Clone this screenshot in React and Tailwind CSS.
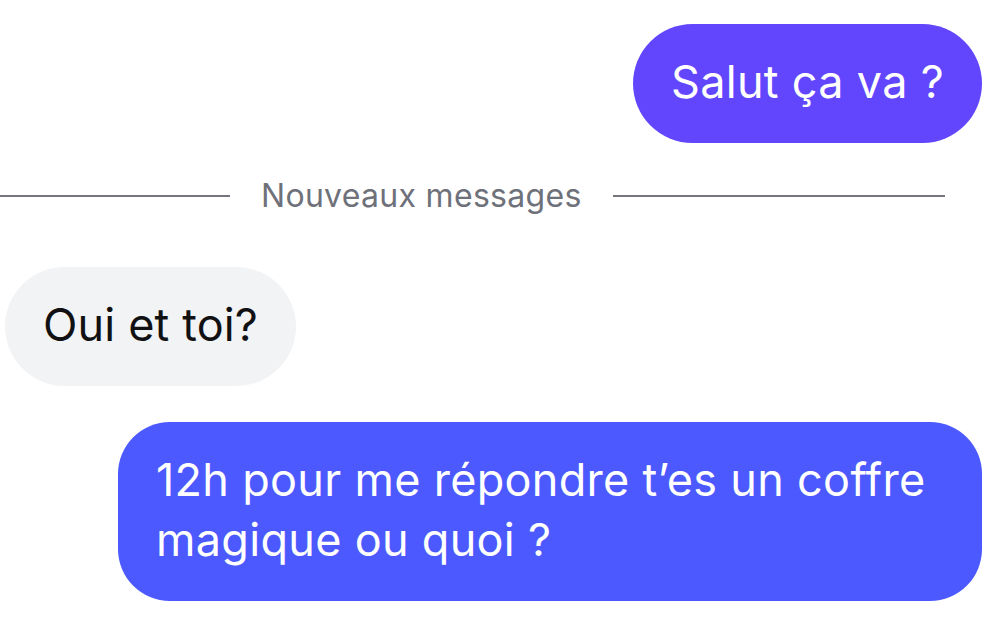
import React from "react";

const messages = [
  { id: 1, mine: true, text: "Salut ça va ?", color: "bg-[#6146fe]", radius: "rounded-[60px]" },
  { id: 2, mine: false, text: "Oui et toi?" },
  {
    id: 3,
    mine: true,
    text: "12h pour me répondre t’es un coffre magique ou quoi ?",
    color: "bg-[#4b59fe]",
    radius: "rounded-[52px]",
  },
];

const Bubble = ({ msg }) => {
  if (msg.mine) {
    return (
      <div className="flex justify-end pr-[23px]">
        <div
          className={`${msg.color} ${msg.radius} text-white px-[38px] pt-[28px] pb-[31px] max-w-[864px] text-[45px] leading-[60px] tracking-[0.3px]`}
        >
          {msg.text}
        </div>
      </div>
    );
  }
  return (
    <div className="flex justify-start pl-[5px]">
      <div className="bg-[#f2f3f5] text-[#111113] rounded-[60px] px-[38px] pt-[28px] pb-[31px] text-[45px] leading-[60px] tracking-[0.15px]">
        {msg.text}
      </div>
    </div>
  );
};

const Divider = () => {
  return (
    <div className="flex items-center w-[945px] mt-[28px] mb-[46px] h-[50px]">
      <div className="w-[230px] h-[2px] bg-[#75767d]"></div>
      <p className="px-[31px] text-[32px] text-[#6f717a] leading-[50px] tracking-[0.3px] whitespace-nowrap">
        Nouveaux messages
      </p>
      <div className="flex-1 h-[2px] bg-[#75767d]"></div>
    </div>
  );
};

export default function App() {
  return (
    <div
      className="w-[1005px] h-[620px] bg-white overflow-hidden pt-[24px]"
      style={{ fontFamily: "Inter, 'Noto Sans', sans-serif" }}
    >
      <div className="flex flex-col">
        <Bubble msg={messages[0]} />
        <Divider />
        <Bubble msg={messages[1]} />
        <div className="h-[36px]"></div>
        <Bubble msg={messages[2]} />
      </div>
    </div>
  );
}
